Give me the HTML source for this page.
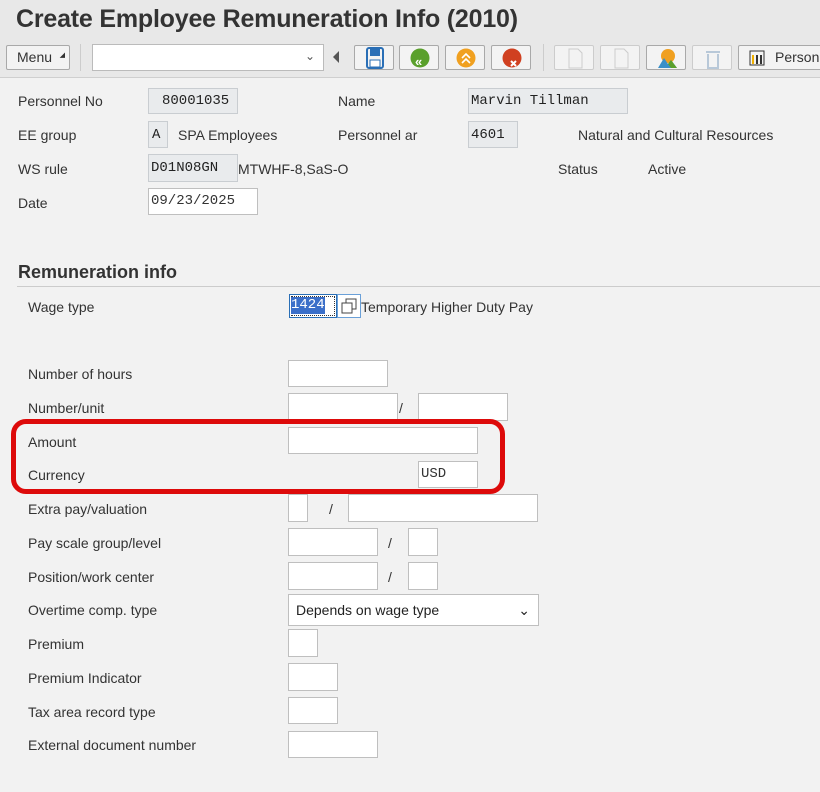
<!DOCTYPE html>
<html><head><meta charset="utf-8"><style>
*{box-sizing:border-box;margin:0;padding:0}
body{width:820px;height:792px;overflow:hidden;background:#f2f2f2;font-family:"Liberation Sans",Arial,sans-serif;color:#333;position:relative}
.a{position:absolute}
.t{font-size:14px;color:#333;white-space:nowrap}
.in{position:absolute;background:#fff;border:1px solid #bfbfbf}
.ro{position:absolute;background:#e9ebed;border:1px solid #c9cdd1;font-family:"Liberation Mono",monospace;font-size:14px;color:#222;padding-left:6px;display:flex;align-items:center}
.btn{position:absolute;top:45px;width:40px;height:25px;border:1px solid #a9a9a9;background:#f3f3f3;border-radius:2px}
</style></head><body>
<div class="a" style="left:0;top:0;width:820px;height:78px;background:#e8e8e8;border-bottom:1px solid #cfcfcf"></div>
<div class="a" style="left:16px;top:5px;font-size:25px;font-weight:bold;color:#333;letter-spacing:-0.2px">Create Employee Remuneration Info (2010)</div>
<div class="btn" style="left:6px;width:64px;font-size:14px;line-height:23px;padding-left:10px">Menu<span style="position:absolute;right:4px;bottom:2px;font-size:7px">◢</span></div>
<div class="a" style="left:80px;top:44px;width:1px;height:27px;background:#ccc"></div>
<div class="in" style="left:92px;top:44px;width:232px;height:27px;border-color:#bbb"><span style="position:absolute;right:8px;top:4px;font-size:12px;color:#555">⌄</span></div>
<div class="a" style="left:333px;top:51px;width:0;height:0;border-right:6px solid #555;border-top:6px solid transparent;border-bottom:6px solid transparent"></div>
<div class="btn" style="left:354px"><svg width="40" height="25"><rect x="12" y="2" width="16" height="20" rx="2" fill="none" stroke="#2a6fb6" stroke-width="2"/><rect x="15" y="3" width="10" height="7" fill="#2a6fb6"/><rect x="15" y="14" width="10" height="7" fill="#fff" stroke="#2a6fb6"/></svg></div>
<div class="btn" style="left:399px"><svg width="40" height="25"><circle cx="20" cy="12" r="9.5" fill="#5aa02c"/><text x="15" y="20" font-size="13" fill="#fff" font-weight="bold">«</text></svg></div>
<div class="btn" style="left:445px"><svg width="40" height="25"><circle cx="20" cy="12" r="9.5" fill="#f0a020"/><path d="M16 12l4-4 4 4M16 17l4-4 4 4" fill="none" stroke="#fff" stroke-width="1.6"/></svg></div>
<div class="btn" style="left:491px"><svg width="40" height="25"><circle cx="20" cy="12" r="9.5" fill="#d04020"/><path d="M19 15l5 5M24 15l-5 5" stroke="#fff" stroke-width="2"/></svg></div>
<div class="a" style="left:543px;top:44px;width:1px;height:27px;background:#ccc"></div>
<div class="btn" style="left:554px;border-color:#ccc"><svg width="40" height="25"><path d="M14 3h9l4 4v15h-13z" fill="none" stroke="#ccc"/></svg></div>
<div class="btn" style="left:600px;border-color:#ccc"><svg width="40" height="25"><path d="M14 3h9l4 4v15h-13z" fill="none" stroke="#ccc"/></svg></div>
<div class="btn" style="left:646px"><svg width="40" height="25"><circle cx="21" cy="10" r="7" fill="#f0a020"/><path d="M11 22l6-10 4 6 3-4 6 8z" fill="#3a8fc8"/><path d="M21 18l3-4 6 8h-6z" fill="#5aa02c"/></svg></div>
<div class="btn" style="left:692px;border-color:#ccc"><svg width="40" height="25"><path d="M13 6h14M15 8v14h10V8" fill="none" stroke="#b8c8d8" stroke-width="2"/></svg></div>
<div class="btn" style="left:738px;width:90px;font-size:14px;line-height:23px;padding-left:36px"><svg class="a" style="left:10px;top:4px" width="16" height="16"><rect x="1" y="1" width="14" height="14" fill="none" stroke="#333"/><rect x="3" y="5" width="2" height="9" fill="#f0b000"/><rect x="7" y="5" width="2" height="9" fill="#333"/><rect x="11" y="5" width="2" height="9" fill="#333"/></svg>Person</div>

<div class="a t" style="left:18px;top:93px">Personnel No</div>
<div class="ro" style="left:148px;top:88px;width:90px;height:26px;padding-left:13px">80001035</div>
<div class="a t" style="left:338px;top:93px">Name</div>
<div class="ro" style="left:468px;top:88px;width:160px;height:26px;padding-left:2px">Marvin Tillman</div>
<div class="a t" style="left:18px;top:127px">EE group</div>
<div class="ro" style="left:148px;top:121px;width:20px;height:27px;padding-left:3px">A</div>
<div class="a t" style="left:178px;top:127px">SPA Employees</div>
<div class="a t" style="left:338px;top:127px">Personnel ar</div>
<div class="ro" style="left:468px;top:121px;width:50px;height:27px;padding-left:2px">4601</div>
<div class="a t" style="left:578px;top:127px">Natural and Cultural Resources</div>
<div class="a t" style="left:18px;top:161px">WS rule</div>
<div class="ro" style="left:148px;top:154px;width:90px;height:28px;padding-left:2px">D01N08GN</div>
<div class="a t" style="left:238px;top:161px">MTWHF-8,SaS-O</div>
<div class="a t" style="left:558px;top:161px">Status</div>
<div class="a t" style="left:648px;top:161px">Active</div>
<div class="a t" style="left:18px;top:195px">Date</div>
<div class="in" style="left:148px;top:188px;width:110px;height:27px;font-family:'Liberation Mono',monospace;font-size:14px;line-height:25px;padding-left:2px">09/23/2025</div>

<div class="a" style="left:18px;top:262px;font-size:18px;font-weight:bold;color:#333">Remuneration info</div>
<div class="a" style="left:17px;top:286px;width:803px;height:1px;background:#ccc"></div>
<div class="a t" style="left:28px;top:299px">Wage type</div>
<div class="a" style="left:289px;top:294px;width:48px;height:24px;border:1px solid #2a6fb6;background:#fff"><div style="position:absolute;left:1px;top:1px;right:1px;bottom:1px;border:1px dotted #333"></div><span style="position:absolute;left:1px;top:2px;background:#3b6fc9;color:#fff;font-family:'Liberation Mono',monospace;font-size:14px;line-height:17px">1424</span></div>
<div class="a" style="left:337px;top:294px;width:24px;height:24px;border:1px solid #6aa0d8;background:#fff"><svg width="22" height="22"><rect x="4" y="8" width="10" height="10" fill="none" stroke="#444"/><path d="M8 8V4h10v10h-4" fill="none" stroke="#444"/></svg></div>
<div class="a t" style="left:361px;top:299px">Temporary Higher Duty Pay</div>

<div class="a t" style="left:28px;top:366px">Number of hours</div>
<div class="in" style="left:288px;top:360px;width:100px;height:27px"></div>
<div class="a t" style="left:28px;top:400px">Number/unit</div>
<div class="in" style="left:288px;top:393px;width:110px;height:28px"></div>
<div class="a t" style="left:399px;top:400px">/</div>
<div class="in" style="left:418px;top:393px;width:90px;height:28px"></div>
<div class="a t" style="left:28px;top:434px">Amount</div>
<div class="in" style="left:288px;top:427px;width:190px;height:27px"></div>
<div class="a t" style="left:28px;top:467px">Currency</div>
<div class="in" style="left:418px;top:461px;width:60px;height:27px;font-family:'Liberation Mono',monospace;font-size:14px;line-height:25px;padding-left:2px">USD</div>
<div class="a" style="left:11px;top:419px;width:494px;height:75px;border:5px solid #dd0a0a;border-radius:15px"></div>

<div class="a t" style="left:28px;top:501px">Extra pay/valuation</div>
<div class="in" style="left:288px;top:494px;width:20px;height:28px"></div>
<div class="a t" style="left:329px;top:501px">/</div>
<div class="in" style="left:348px;top:494px;width:190px;height:28px"></div>
<div class="a t" style="left:28px;top:535px">Pay scale group/level</div>
<div class="in" style="left:288px;top:528px;width:90px;height:28px"></div>
<div class="a t" style="left:388px;top:535px">/</div>
<div class="in" style="left:408px;top:528px;width:30px;height:28px"></div>
<div class="a t" style="left:28px;top:569px">Position/work center</div>
<div class="in" style="left:288px;top:562px;width:90px;height:28px"></div>
<div class="a t" style="left:388px;top:569px">/</div>
<div class="in" style="left:408px;top:562px;width:30px;height:28px"></div>
<div class="a t" style="left:28px;top:602px">Overtime comp. type</div>
<div class="in" style="left:288px;top:594px;width:251px;height:32px;font-size:14px;line-height:30px;padding-left:7px;color:#222">Depends on wage type<span style="position:absolute;right:8px;top:0;font-size:14px">⌄</span></div>
<div class="a t" style="left:28px;top:636px">Premium</div>
<div class="in" style="left:288px;top:629px;width:30px;height:28px"></div>
<div class="a t" style="left:28px;top:670px">Premium Indicator</div>
<div class="in" style="left:288px;top:663px;width:50px;height:28px"></div>
<div class="a t" style="left:28px;top:704px">Tax area record type</div>
<div class="in" style="left:288px;top:697px;width:50px;height:27px"></div>
<div class="a t" style="left:28px;top:737px">External document number</div>
<div class="in" style="left:288px;top:731px;width:90px;height:27px"></div>
</body></html>
